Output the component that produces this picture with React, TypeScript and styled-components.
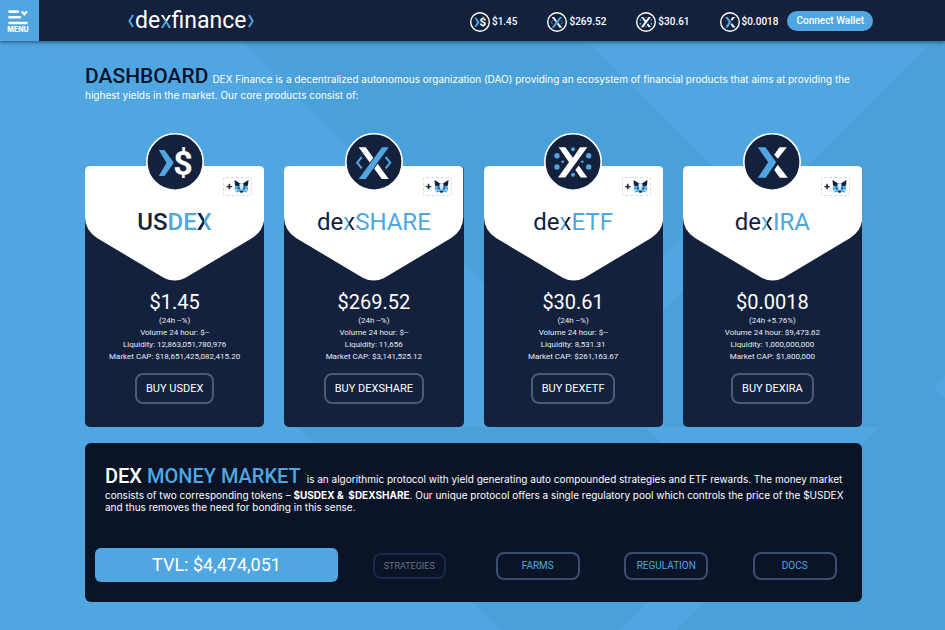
import React from "react";
import styled, { createGlobalStyle } from "styled-components";

const colors = {
  sky: "#4fa6e1",
  skyShade: "#4aa0d8",
  navy: "#14213d",
  ink: "#0b1427",
  white: "#ffffff",
};

const GlobalStyle = createGlobalStyle`
  * { box-sizing: border-box; }
  body {
    margin: 0;
    background: ${colors.sky};
    font-family: Roboto, "Open Sans", sans-serif;
    font-size: 10px;
    color: ${colors.white};
  }
  button { font-family: inherit; cursor: pointer; }
  h1, h2, p, ul { margin: 0; padding: 0; font-weight: 400; }
`;

const Page = styled.div`
  position: relative;
  min-height: 100vh;
  overflow: hidden;
`;

const Backdrop = styled.svg`
  position: absolute;
  inset: 0;
  width: 100%;
  height: 100%;
  z-index: 0;
`;

const Header = styled.header`
  position: relative;
  z-index: 2;
  display: flex;
  align-items: center;
  height: 41px;
  padding-right: 72px;
  background: ${colors.navy};
  box-shadow: 0 1px 4px rgba(11, 20, 39, 0.6);
`;

const MenuButton = styled.button`
  display: flex;
  flex-direction: column;
  align-items: center;
  gap: 1px;
  width: 39px;
  height: 41px;
  padding: 10px 3px 0 0;
  border: 0;
  background: ${colors.sky};
  color: ${colors.white};
  font: 800 7px/8px Inter, sans-serif;
`;

const Logo = styled.a`
  display: flex;
  align-items: center;
  gap: 1px;
  margin-left: 89px;
  color: ${colors.white};
  font-size: 23px;
  line-height: 36px;
  text-decoration: none;
`;

const LogoText = styled.span`
  display: block;
`;

const SplitX = styled.span<{ $from: string; $to: string; $angle?: number }>`
  background: linear-gradient(
    ${(p) => p.$angle ?? 90}deg,
    ${(p) => p.$from} 50%,
    ${(p) => p.$to} 50%
  );
  background-clip: text;
  -webkit-background-clip: text;
  color: transparent;
`;

const Tickers = styled.ul`
  display: flex;
  gap: 30px;
  margin-left: auto;
  list-style: none;
`;

const Ticker = styled.li`
  display: flex;
  align-items: center;
  gap: 2px;
  padding-top: 2px;
  font-size: 10px;
  font-weight: 500;
  line-height: 20px;
`;

const WalletButton = styled.button`
  height: 20px;
  margin-left: 9px;
  padding: 0 9px;
  border: 0;
  border-radius: 10px;
  background: ${colors.sky};
  color: ${colors.white};
  font-size: 10px;
  font-weight: 500;
  line-height: 20px;
`;

const Main = styled.main`
  position: relative;
  z-index: 1;
  padding: 24px 83px 28px 85px;
`;

const Intro = styled.div`
  font-family: Inter, sans-serif;
  line-height: 16px;
`;

const Title = styled.h1`
  display: inline;
  margin-right: 4px;
  color: ${colors.ink};
  font-family: Roboto, sans-serif;
  font-size: 21px;
  font-weight: 500;
  line-height: 22px;
`;

const Text = styled.p`
  display: inline;
`;

const Cards = styled.section`
  display: grid;
  grid-template-columns: repeat(4, minmax(0, 1fr));
  gap: 20px;
  margin-top: 63px;
`;

const Card = styled.article`
  position: relative;
  display: flex;
  flex-direction: column;
  align-items: center;
  padding-bottom: 23px;
  border-radius: 5px;
  background: ${colors.navy};
`;

const Flap = styled.svg`
  position: absolute;
  top: 0;
  left: 0;
  width: 100%;
  height: 115px;
`;

const Badge = styled.div`
  position: absolute;
  top: -33px;
  left: 50%;
  margin-left: -29px;
  line-height: 0;
`;

const AddToken = styled.button`
  position: absolute;
  top: 11px;
  right: 12px;
  display: flex;
  align-items: center;
  justify-content: center;
  gap: 2px;
  width: 29px;
  height: 19px;
  padding: 0;
  border: 1px dashed #d5dbe6;
  border-radius: 3px;
  background: ${colors.white};
  color: ${colors.navy};
  font-size: 11px;
  font-weight: 700;
  line-height: 16px;
`;

const TokenName = styled.h2<{ $strong?: boolean }>`
  position: relative;
  margin-top: 40px;
  color: ${colors.navy};
  font-size: 24px;
  font-weight: ${(p) => (p.$strong ? 500 : 400)};
  line-height: 32px;
`;

const Accent = styled.span`
  color: ${colors.sky};
`;

const Price = styled.p`
  margin-top: 52px;
  font-size: 20px;
  line-height: 25px;
`;

const Stats = styled.ul`
  list-style: none;
  color: #e6eaf2;
  font-size: 8px;
  line-height: 12px;
  text-align: center;
`;

const OutlineButton = styled.button<{ $size?: "buy" | "link" | "muted" }>`
  height: ${(p) => (p.$size === "buy" ? 31 : p.$size === "muted" ? 26 : 28)}px;
  min-width: ${(p) => (p.$size === "buy" ? 0 : p.$size === "muted" ? 73 : 84)}px;
  padding: 0 9px;
  border: 2px solid ${(p) => (p.$size === "buy" ? "#4e5a73" : p.$size === "muted" ? "#1c2947" : "#3e4d6b")};
  border-radius: 8px;
  background: transparent;
  color: ${(p) => (p.$size === "buy" ? colors.white : p.$size === "muted" ? "#66718a" : colors.sky)};
  font-size: ${(p) => (p.$size === "buy" ? 11 : p.$size === "muted" ? 9 : 10)}px;
  line-height: 12px;
`;

const BuyRow = styled.div`
  margin-top: 10px;
`;

const Market = styled.section`
  margin-top: 16px;
  padding: 20px 3px 18px 10px;
  border-radius: 6px;
  background: ${colors.ink};
`;

const MarketIntro = styled.div`
  padding: 0 10px;
  font-family: Inter, sans-serif;
  line-height: 12px;
`;

const MarketTitle = styled.h2`
  display: inline;
  margin-right: 6px;
  font-family: Roboto, sans-serif;
  font-size: 20px;
  font-weight: 500;
  line-height: 26px;
`;

const MarketActions = styled.div`
  display: grid;
  grid-template-columns: minmax(0, 249fr) repeat(4, minmax(0, 128fr));
  align-items: center;
  justify-items: center;
  margin-top: 35px;
`;

const Tvl = styled.div`
  justify-self: stretch;
  margin: 0 7px 2px 0;
  border-radius: 6px;
  background: ${colors.sky};
  font-size: 18px;
  line-height: 34px;
  text-align: center;
`;

type TokenId = "usdex" | "share" | "etf" | "ira";

function TokenMark({ id }: { id: TokenId }) {
  switch (id) {
    case "usdex":
      return (
        <>
          <path fill={colors.sky} d="M12.8 17h5.7l9.3 12.7L18.5 43h-5.7l7.7-13.3z" />
          <text x="37" y="42" textAnchor="middle" fontFamily="Roboto, sans-serif" fontWeight="700" fontSize="34" fill="#fff">$</text>
        </>
      );
    case "share":
      return (
        <>
          <path fill="#fff" d="M13.7 14.3h7L43.7 46h-7z" />
          <path fill={colors.sky} stroke={colors.navy} strokeWidth="1.6" paintOrder="stroke" d="M37 14.3h6.7l-23 31.7h-7z" />
          <path fill="none" stroke={colors.sky} strokeWidth="2" d="M16.8 24l-4.6 5.7 4.6 5.7M40.6 24l4.6 5.7-4.6 5.7" />
        </>
      );
    case "etf":
      return (
        <>
          <path fill="#fff" d="M36 14.3h7.3l-22 30.2H14l11-15.2-10.3-15h6.6l7.7 10.4zM34.7 32.5l8.6 12h-6.6L31.3 37z" />
          <g fill={colors.sky}>
            <circle cx="13" cy="22.7" r="2.7" />
            <circle cx="13" cy="34" r="2.7" />
            <circle cx="44.7" cy="22.7" r="2.7" />
            <circle cx="44.7" cy="34" r="2.7" />
            <circle cx="29" cy="16.3" r="2" />
            <circle cx="29" cy="41.7" r="2" />
            <circle cx="18.7" cy="28.7" r="1.3" />
            <circle cx="38.3" cy="28.7" r="1.3" />
          </g>
        </>
      );
    case "ira":
      return (
        <>
          <path fill={colors.sky} d="M14.8 14.3h7.7l10.7 15-10.4 15.4h-8l10.4-15.4z" />
          <path fill="#fff" d="M36.5 14.3h7.3l-9 11.4-3.6-4zM34.8 31.7l10 13h-8L31.2 37z" />
        </>
      );
  }
}

function TokenIcon({ id, size, ring }: { id: TokenId; size: number; ring: number }) {
  return (
    <svg width={size} height={size} viewBox="0 0 58 58" aria-hidden="true">
      <circle cx="29" cy="29" r={29 - ring / 2} fill={colors.navy} stroke="#fff" strokeWidth={ring} />
      <TokenMark id={id} />
    </svg>
  );
}

function Fox() {
  return (
    <svg width="15" height="13" viewBox="0 0 15 13" aria-hidden="true">
      <path fill={colors.sky} d="M2 4l3.5-.5h4L13 4l1.3 5-1.5 3.4-3-.6-1.3 1h-2l-1.3-1-3 .6L.7 9z" />
      <path fill={colors.navy} d="M.5 0l5.3 3.2-1 3L1 5.6zM14.5 0L9.2 3.2l1 3 3.8-.6zM4 7.3l2.2 1-1.8.8zM11 7.3l-2.2 1 1.8.8zM6.2 11h2.6v1.6H6.2z" />
      <path fill="#dcebf7" d="M5.8 4h3.4l-.6 5.5H6.4zM1.5 9.5l2.7.3-1.8 1.7zM13.5 9.5l-2.7.3 1.8 1.7z" />
    </svg>
  );
}

function Chevron({ flip }: { flip?: boolean }) {
  return (
    <svg width="6" height="14" viewBox="0 0 6 14" aria-hidden="true">
      <path fill="none" stroke={colors.sky} strokeWidth="2" d={flip ? "M1 1l3.6 6L1 13" : "M5 1L1.4 7 5 13"} />
    </svg>
  );
}

interface Token {
  id: TokenId;
  price: string;
  change: string;
  volume: string;
  liquidity: string;
  cap: string;
  buy: string;
  suffix?: string;
}

const tokens: Token[] = [
  { id: "usdex", price: "$1.45", change: "--%", volume: "$--", liquidity: "12,863,051,780,976", cap: "$18,651,425,082,415.20", buy: "BUY USDEX" },
  { id: "share", price: "$269.52", change: "--%", volume: "$--", liquidity: "11,656", cap: "$3,141,525.12", buy: "BUY DEXSHARE", suffix: "SHARE" },
  { id: "etf", price: "$30.61", change: "--%", volume: "$--", liquidity: "8,531.31", cap: "$261,163.67", buy: "BUY DEXETF", suffix: "ETF" },
  { id: "ira", price: "$0.0018", change: "+5.76%", volume: "$9,473.62", liquidity: "1,000,000,000", cap: "$1,800,000", buy: "BUY DEXIRA", suffix: "IRA" },
];

function TokenCard({ token }: { token: Token }) {
  return (
    <Card>
      <Flap viewBox="0 0 179 115" preserveAspectRatio="none" aria-hidden="true">
        <path fill="#fff" d="M0 5Q0 0 5 0H174Q179 0 179 5V51Q179 64 167 72L100 112Q89.5 117 79 112L12 72Q0 64 0 51Z" />
      </Flap>
      <Badge>
        <TokenIcon id={token.id} size={58} ring={1.6} />
      </Badge>
      <AddToken type="button" aria-label={`Add ${token.id} to wallet`}>
        <span>+</span>
        <Fox />
      </AddToken>
      <TokenName $strong={!token.suffix}>
        {token.suffix ? (
          <>
            de<SplitX $from={colors.sky} $to={colors.navy}>x</SplitX>
            <Accent>{token.suffix}</Accent>
          </>
        ) : (
          <>
            US<Accent>DE</Accent>
            <SplitX $from={colors.navy} $to={colors.sky}>X</SplitX>
          </>
        )}
      </TokenName>
      <Price>{token.price}</Price>
      <Stats>
        <li>(24h {token.change})</li>
        <li>Volume 24 hour: {token.volume}</li>
        <li>Liquidity: {token.liquidity}</li>
        <li>Market CAP: {token.cap}</li>
      </Stats>
      <BuyRow>
        <OutlineButton type="button" $size="buy">{token.buy}</OutlineButton>
      </BuyRow>
    </Card>
  );
}

export default function App() {
  return (
    <>
      <GlobalStyle />
      <Page>
        <Backdrop viewBox="0 0 945 630" preserveAspectRatio="xMidYMin slice" aria-hidden="true">
          <g fill={colors.skyShade}>
            <path d="M243 42H588L732 187 560 360z" />
            <path d="M932 42L600 374l53 53h227L677 630h268V398l-11-11 11-11V42z" />
            <path d="M298 427h347l89 89-114 114H501z" />
          </g>
        </Backdrop>
        <Header>
          <MenuButton type="button">
            <svg width="20" height="15" viewBox="0 0 20 15" aria-hidden="true">
              <path fill="none" stroke="#fff" strokeWidth="2.6" strokeLinecap="round" d="M1.5 1.6h8.5M1.5 7.2h10.5M1.5 13h17" />
              <path fill="#fff" d="M13 2.2q0-1.2 1.4-1.2l1.9 1.2L18.2 1q1.4 0 1.4 1.2L16.3 6z" />
            </svg>
            MENU
          </MenuButton>
          <Logo href="#">
            <Chevron />
            <LogoText>
              de<SplitX $from={colors.sky} $to={colors.white} $angle={45}>x</SplitX>finance
            </LogoText>
            <Chevron flip />
          </Logo>
          <Tickers>
            {tokens.map((t) => (
              <Ticker key={t.id}>
                <TokenIcon id={t.id} size={20} ring={4} />
                {t.price}
              </Ticker>
            ))}
          </Tickers>
          <WalletButton type="button">Connect Wallet</WalletButton>
        </Header>
        <Main>
          <Intro>
            <Title>DASHBOARD</Title>
            <Text>
              DEX Finance is a decentralized autonomous organization (DAO) providing an ecosystem of financial products
              that aims at providing the highest yields in the market. Our core products consist of:
            </Text>
          </Intro>
          <Cards>
            {tokens.map((t) => (
              <TokenCard key={t.id} token={t} />
            ))}
          </Cards>
          <Market>
            <MarketIntro>
              <MarketTitle>
                DEX <Accent>MONEY MARKET</Accent>
              </MarketTitle>
              <Text>
                is an algorithmic protocol with yield generating auto compounded strategies and ETF rewards. The money
                market consists of two corresponding tokens – <b>$USDEX &amp; &nbsp;$DEXSHARE</b>. Our unique protocol
                offers a single regulatory pool which controls the price of the $USDEX and thus removes the need for
                bonding in this sense.
              </Text>
            </MarketIntro>
            <MarketActions>
              <Tvl>TVL: $4,474,051</Tvl>
              <OutlineButton type="button" $size="muted">STRATEGIES</OutlineButton>
              <OutlineButton type="button">FARMS</OutlineButton>
              <OutlineButton type="button">REGULATION</OutlineButton>
              <OutlineButton type="button">DOCS</OutlineButton>
            </MarketActions>
          </Market>
        </Main>
      </Page>
    </>
  );
}
